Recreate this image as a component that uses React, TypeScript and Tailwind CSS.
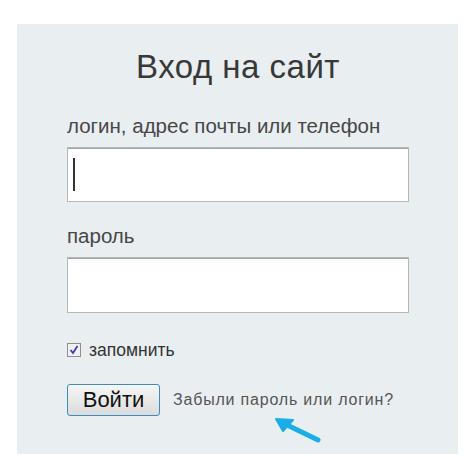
export default function App() {
  return (
    <div className="w-[474px] h-[472px] bg-white pt-[24px] pl-[17px] font-['Liberation_Sans',Arial,sans-serif]">
      <div className="w-[441px] h-[430px] bg-[#e9eef1] pl-[50px] pr-[49px]">
        <h1 className="pt-[23px] text-center text-[33px] tracking-[0.5px] leading-[40px] text-[#383838]">Вход на сайт</h1>
        <label className="block mt-[27px] text-[20.5px] leading-[24px] text-[#474747]">логин, адрес почты или телефон</label>
        <div className="mt-[9px] h-[55px] bg-white border border-[#b4b8bb] shadow-[inset_0_1px_0_#a0a4a7] flex items-center pl-[5px]">
          <div className="w-[2px] h-[33px] bg-[#333]" />
        </div>
        <label className="block mt-[22px] text-[20.5px] leading-[24px] text-[#474747]">пароль</label>
        <div className="mt-[9px] h-[56px] bg-white border border-[#b4b8bb] shadow-[inset_0_1px_0_#a0a4a7]" />
        <div className="mt-[27px] flex items-center gap-[8px]">
          <svg width="14" height="14" viewBox="0 0 14 14">
            <rect x="0.5" y="0.5" width="13" height="13" fill="#f0f0f4" stroke="#8e8f8f" />
            <path d="M3.5 7 L6 10 L10.5 3" fill="none" stroke="#3b3fb0" strokeWidth="1.8" />
          </svg>
          <span className="text-[17.5px] leading-[20px] text-[#333]">запомнить</span>
        </div>
        <div className="mt-[24px] flex items-center">
          <button className="w-[93px] h-[32px] rounded-[3px] border border-[#3c8dbf] bg-gradient-to-b from-[#f6f6f6] to-[#dcdcdc] text-[22px] leading-[24px] text-[#111]">Войти</button>
          <a className="ml-[13px] text-[16px] tracking-[0.8px] text-[#555]">Забыли пароль или логин?</a>
        </div>
        <svg className="ml-[206px] mt-[1px]" width="50" height="30" viewBox="0 0 50 30">
          <path d="M45 23 L10 6" stroke="#1aade6" strokeWidth="5" strokeLinecap="round" />
          <path d="M3 2 L20 3 L10 14 Z" fill="#1aade6" stroke="#1aade6" strokeWidth="2" strokeLinejoin="round" />
        </svg>
      </div>
    </div>
  );
}
